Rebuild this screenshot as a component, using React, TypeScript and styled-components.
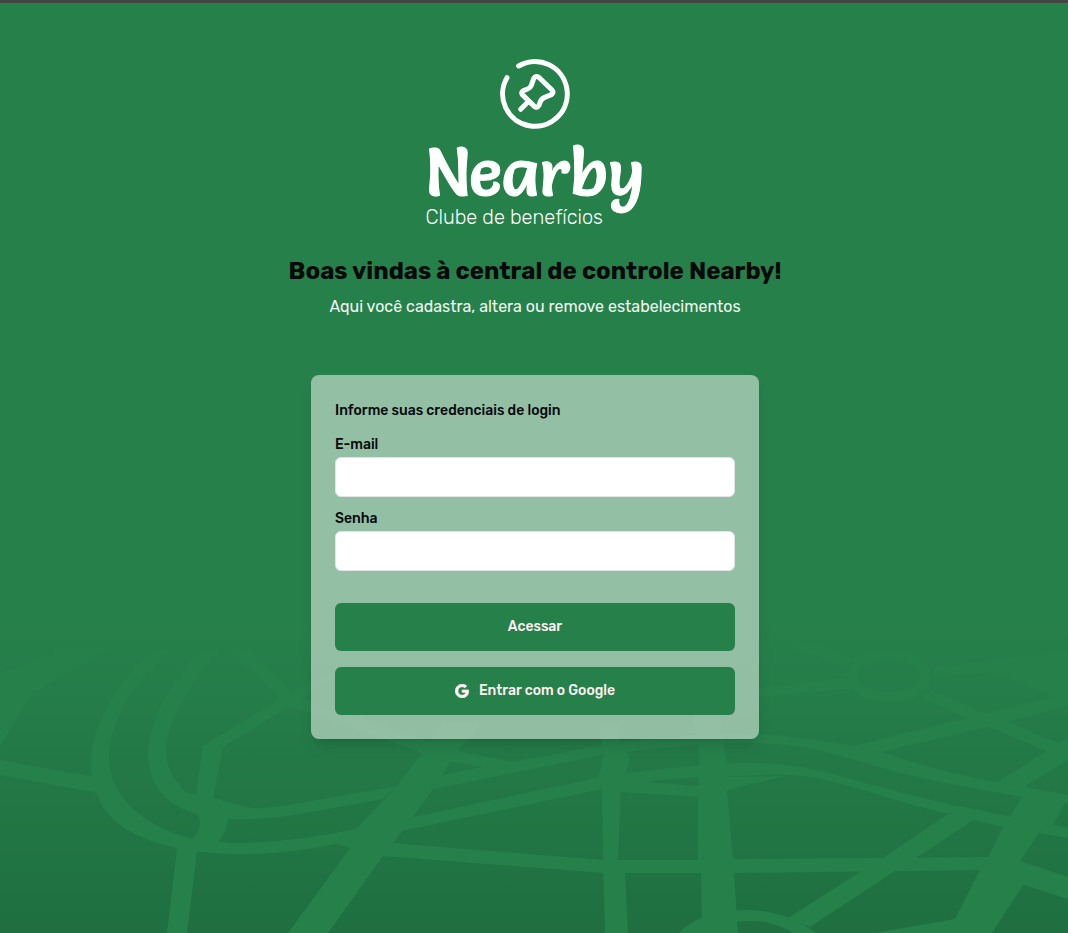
import React from 'react';
import styled, { createGlobalStyle } from 'styled-components';
import { FaGoogle } from 'react-icons/fa';

const green = '#26804a';
const ink = '#09090b';

const GlobalStyle = createGlobalStyle`
  *, *::before, *::after { box-sizing: border-box; }
  body {
    margin: 0;
    background: ${green};
    color: ${ink};
    font-family: Rubik, Roboto, sans-serif;
    -webkit-font-smoothing: antialiased;
  }
`;

const Page = styled.div`
  position: relative;
  isolation: isolate;
  min-height: 100vh;
  padding: 56px 24px 56px 26px;
  border-top: 3px solid #444444;
  display: flex;
  flex-direction: column;
  align-items: center;
`;

const MapArt = styled.svg`
  position: absolute;
  z-index: -1;
  left: 0;
  bottom: 0;
  width: 100%;
  height: auto;
  display: block;
`;

const Logo = styled.div`
  display: flex;
  flex-direction: column;
  align-items: center;
  color: #ffffff;
`;

const PinMark = styled.svg`
  width: 70px;
  height: 70px;
`;

const Wordmark = styled.span`
  margin-top: 10px;
  font-family: Salsa, 'Open Sans', sans-serif;
  font-size: 67px;
  font-weight: 400;
  line-height: 66px;
  -webkit-text-stroke: 1px currentColor;
`;

const Tagline = styled.span`
  align-self: flex-start;
  font-size: 20px;
  font-weight: 300;
  line-height: 24px;
`;

const Header = styled.header`
  display: flex;
  flex-direction: column;
  align-items: center;
  gap: 8px;
  text-align: center;
`;

const Title = styled.h1`
  margin: 18px 0 0;
  font-size: 24px;
  font-weight: 700;
  line-height: 32px;
`;

const Subtitle = styled.p`
  margin: 0;
  font-size: 16px;
  line-height: 24px;
  color: #f1f8f3;
`;

const Card = styled.form`
  width: 100%;
  max-width: 448px;
  margin-top: 56px;
  padding: 24px;
  border-radius: 8px;
  background: rgba(255, 255, 255, 0.5);
  box-shadow: 0 10px 15px -3px rgba(0, 0, 0, 0.1), 0 4px 6px -4px rgba(0, 0, 0, 0.1);
  display: flex;
  flex-direction: column;
  gap: 10px;
  font-size: 14px;
  font-weight: 500;
  line-height: 24px;
`;

const CardTitle = styled.h2`
  margin: 0;
  font: inherit;
`;

const Field = styled.div`
  display: flex;
  flex-direction: column;
`;

const TextInput = styled.input`
  height: 40px;
  padding: 8px 12px;
  border: 1px solid #e4e4e7;
  border-radius: 6px;
  background: #ffffff;
  font: inherit;
`;

const Actions = styled.div`
  display: flex;
  flex-direction: column;
  gap: 16px;
  padding-top: 22px;
`;

const Button = styled.button`
  height: 48px;
  border: 0;
  border-radius: 6px;
  background: ${green};
  color: #fff1f2;
  font: inherit;
  display: flex;
  align-items: center;
  justify-content: center;
  gap: 10px;
  cursor: pointer;
`;

const GoogleMark = styled(FaGoogle)`
  width: 14px;
  height: 14px;
  stroke: currentColor;
  stroke-width: 28px;
`;

const roads = [
  'M0 53L70 28H108L33 73L28 80L0 126Z',
  'M0 140L95 157L98 173L0 155Z',
  'M150 31C118 62 91 105 91 142C91 190 120 216 177 228C225 238 280 235 337 224L350 228L360 208C300 221 235 228 190 218C140 206 109 172 109 138C109 100 135 62 168 31Z',
  'M200 31C172 60 148 100 148 135C148 165 168 187 198 194C222 202 265 200 300 194L383 179L397 166L300 183C275 187 262 189 250 188L213 178L195 174L187 173C172 160 166 145 166 130C166 105 190 62 220 31Z',
  'M203 126L280 79L233 31H250L292 71L330 54V60L303 78L432 122L458 131L513 142L602 125V135L433 169L442 155L483 147L452 142L422 133L310 93L288 87L223 127L213 178L196 175Z',
  'M198 194Q204 206 192 220L177 228L167 313H187L197 232L217 223Q227 213 228 198Z',
  'M288 313L350 228L345 220L357 208L397 166L422 133L442 103H482L458 130L433 169L413 197L402 211L393 223L383 236L328 313Z',
  'M413 197L597 158L602 169L402 211L390 205Z',
  'M393 223L603 240H700L733 239L988 237L980 250L733 253H604L383 236Z',
  'M600 105L603 135Q603 146 597 158L602 169L603 240L605 313H628L625 252L618 240L621 172L625 154Q631 143 628 132L619 119V105Z',
  'M602 125C660 116 710 112 759 114C805 117 835 123 853 126L881 132C920 145 955 155 998 162L1068 175V184L1021 177C980 169 940 163 901 153C860 142 825 130 795 126C750 120 690 124 628 132Z',
  'M597 158L625 154C680 146 715 143 751 143C808 143 840 157 885 168C925 180 970 188 1011 197L1003 207L948 194C900 183 855 166 818 158C790 153 760 155 725 157C690 157 665 159 645 162L621 172Z',
  'M625 160L645 162L699 166L727 157L785 156L727 170L699 177L621 172Z',
  'M693 95L698 124L700 146L698 166V240L701 252L702 313H738L733 239L727 170L724 157L727 144L723 124L720 95Z',
  'M679 313C695 297 717 290 746 290C775 290 799 300 816 313H793C779 304 765 301 748 301C731 301 717 304 703 313Z',
  'M788 298L860 252L883 238L948 194L973 200L916 238L895 251L810 307Z',
  'M875 313L955 299L980 250L988 237L1003 207L1010 197L1022 177L1024 167L1068 175V180L1065 183L1053 205L1039 213L1020 241L1023 265L992 313Z',
  'M1053 205L1068 208V218L1039 213Z',
  'M1020 241L1068 257V279L1015 262Z',
  'M853 126L968 98L1054 77L1068 70V86L1008 102L881 132Z',
  'M921 78L931 70L986 94L1008 102L1058 123L1068 117V140L1024 167L998 162L1046 131L987 106L968 98Z',
  'M759 68L845 58L858 68L759 77Z',
  'M790 26L845 47L855 39L820 26Z',
  'M933 48L993 40L1068 31V75L1054 77L993 52L933 57Z',
];

const MapBackdrop = () => (
  <MapArt viewBox="0 0 1068 313" aria-hidden="true">
    <defs>
      <linearGradient id="map-fade" x1="0" y1="0" x2="0" y2="1">
        <stop offset="0" stopColor="#1f6f40" stopOpacity="0" />
        <stop offset="0.1" stopColor="#1f6f40" stopOpacity="0.05" />
        <stop offset="1" stopColor="#1f6f40" stopOpacity="1" />
      </linearGradient>
    </defs>
    <rect width="1068" height="313" fill="url(#map-fade)" />
    {roads.map((d) => (
      <path key={d} d={d} fill={green} />
    ))}
    <ellipse cx="889" cy="56" rx="37" ry="21" fill="none" stroke={green} strokeWidth="10" />
  </MapArt>
);

export default function App() {
  return (
    <>
      <GlobalStyle />
      <Page>
        <MapBackdrop />
        <Header>
          <Logo>
            <PinMark
              viewBox="30 26 210 210"
              fill="none"
              stroke="currentColor"
              strokeWidth="15"
              strokeLinecap="round"
              strokeLinejoin="round"
              aria-hidden="true"
            >
              <path d="M86 47A97 97 0 1 1 51 82" />
              <path d="M148 82L186 119Q192 127 184 133L164 141Q154 145 151 154L147 165Q141 175 133 168L97 133Q92 125 100 121L113 116Q121 113 124 105L131 85Q138 74 148 82Z" />
              <path d="M92 177L113 156" />
            </PinMark>
            <Wordmark>Nearby</Wordmark>
            <Tagline>Clube de benefícios</Tagline>
          </Logo>
          <Title>Boas vindas à central de controle Nearby!</Title>
          <Subtitle>Aqui você cadastra, altera ou remove estabelecimentos</Subtitle>
        </Header>
        <Card onSubmit={(event) => event.preventDefault()}>
          <CardTitle>Informe suas credenciais de login</CardTitle>
          <Field>
            <label htmlFor="email">E-mail</label>
            <TextInput id="email" type="email" />
          </Field>
          <Field>
            <label htmlFor="password">Senha</label>
            <TextInput id="password" type="password" />
          </Field>
          <Actions>
            <Button type="submit">Acessar</Button>
            <Button type="button">
              <GoogleMark aria-hidden="true" />
              Entrar com o Google
            </Button>
          </Actions>
        </Card>
      </Page>
    </>
  );
}
